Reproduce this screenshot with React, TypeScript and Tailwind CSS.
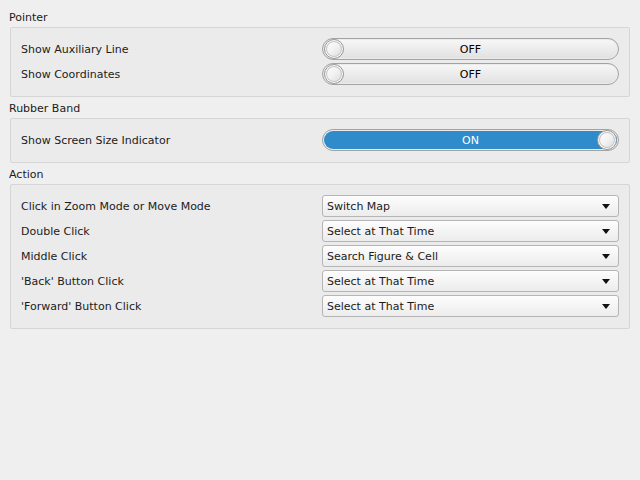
import React from "react";

type Row = { label: string; kind: "toggle"; on: boolean } | { label: string; kind: "combo"; value: string };

const SECTIONS: { title: string; rows: Row[] }[] = [
  {
    title: "Pointer",
    rows: [
      { label: "Show Auxiliary Line", kind: "toggle", on: false },
      { label: "Show Coordinates", kind: "toggle", on: false },
    ],
  },
  {
    title: "Rubber Band",
    rows: [{ label: "Show Screen Size Indicator", kind: "toggle", on: true }],
  },
  {
    title: "Action",
    rows: [
      { label: "Click in Zoom Mode or Move Mode", kind: "combo", value: "Switch Map" },
      { label: "Double Click", kind: "combo", value: "Select at That Time" },
      { label: "Middle Click", kind: "combo", value: "Search Figure & Cell" },
      { label: "'Back' Button Click", kind: "combo", value: "Select at That Time" },
      { label: "'Forward' Button Click", kind: "combo", value: "Select at That Time" },
    ],
  },
];

function Knob() {
  return (
    <div className="h-[20px] w-[20px] shrink-0 rounded-full border border-[#9a9a9a] bg-gradient-to-br from-[#ffffff] via-[#f2f2f2] to-[#d8d8d8] shadow-[inset_0_0_0_1px_#ffffff,inset_0_0_0_2px_#c4c4c4]" />
  );
}

function Toggle({ on }: { on: boolean }) {
  return (
    <div className="flex h-[22px] items-center rounded-full border border-[#a3a3a3] p-[1px]">
      {on ? (
        <div className="flex h-full w-full items-center rounded-full bg-[#2f8bca]">
          <span className="flex-1 pl-[20px] text-center text-white">ON</span>
          <Knob />
        </div>
      ) : (
        <div className="flex h-full w-full items-center rounded-full bg-gradient-to-b from-[#f6f6f6] to-[#e2e2e2]">
          <Knob />
          <span className="flex-1 pr-[20px] text-center text-black">OFF</span>
        </div>
      )}
    </div>
  );
}

function Combo({ value }: { value: string }) {
  return (
    <div className="flex h-[22px] items-center rounded-[3px] border border-[#b5b5b5] bg-gradient-to-b from-[#fdfdfd] to-[#ececec] pl-[4px] pr-[8px]">
      <span className="flex-1 text-[#1b1b1b]">{value}</span>
      <svg width="8" height="5" viewBox="0 0 8 5" className="block">
        <path d="M0 0H8L4 5Z" fill="#111" />
      </svg>
    </div>
  );
}

export default function App() {
  return (
    <div
      className="h-[480px] w-[640px] bg-[#efefef] pt-[6px] text-[11px] leading-[13px] text-[#1b1b1b]"
      style={{ fontFamily: '"DejaVu Sans", sans-serif' }}
    >
      {SECTIONS.map((s) => (
        <section key={s.title}>
          <div className="flex h-[21px] items-center pl-[9px] pt-[1px]">{s.title}</div>
          <div className="mx-[10px] flex flex-col gap-[3px] rounded-[2px] border border-[#d6d6d6] bg-[#ebebeb] pt-[10px] pb-[11px] pl-[10px] pr-[10px]">
            {s.rows.map((r) => (
              <div key={r.label} className="grid grid-cols-[301px_1fr] items-center">
                <span>{r.label}</span>
                {r.kind === "toggle" ? <Toggle on={r.on} /> : <Combo value={r.value} />}
              </div>
            ))}
          </div>
        </section>
      ))}
    </div>
  );
}
